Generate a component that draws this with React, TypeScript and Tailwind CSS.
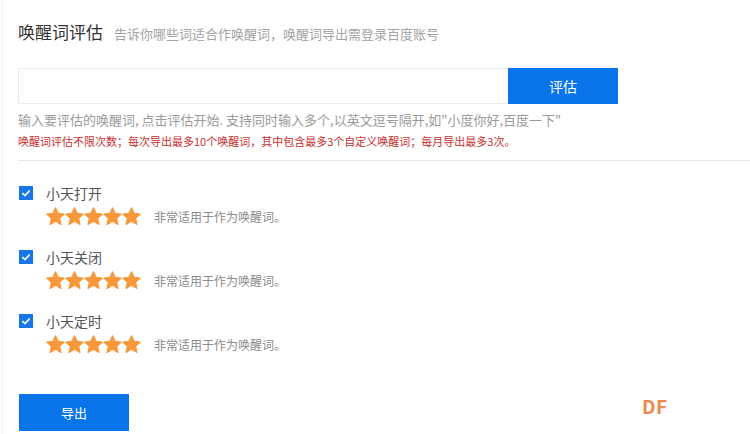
import { useState } from 'react'

const words = ['小天打开', '小天关闭', '小天定时']

function Star() {
  return (
    <svg viewBox="0 0 24 24" className="w-[19px] h-[19px]">
      <polygon
        points="12,1 15.3,8 23,8.9 17.3,14.2 18.9,22 12,18 5.1,22 6.7,14.2 1,8.9 8.7,8"
        fill="#f7993a"
        stroke="#f7993a"
        strokeWidth="1.4"
        strokeLinejoin="round"
      />
    </svg>
  )
}

function Checkbox({ checked, onClick }: { checked: boolean; onClick: () => void }) {
  return (
    <button
      onClick={onClick}
      className={`w-[14px] h-[14px] flex items-center justify-center ${
        checked ? 'bg-[#1677e8]' : 'bg-white border border-[#ccc]'
      }`}
    >
      {checked && (
        <svg viewBox="0 0 14 14" className="w-[14px] h-[14px]">
          <path d="M3.4 7.2 L6 9.6 L10.6 4.6" fill="none" stroke="#fff" strokeWidth="1.6" />
        </svg>
      )}
    </button>
  )
}

export default function App() {
  const [checked, setChecked] = useState([true, true, true])
  const [value, setValue] = useState('')

  return (
    <div
      className="relative w-[750px] h-[434px] overflow-hidden bg-white"
      style={{ fontFamily: '"Noto Sans CJK SC", "Noto Sans", "Liberation Sans", sans-serif' }}
    >
      <div className="ml-[2px] h-full border-l border-[#efefef] pl-[15px]">
        {/* header */}
        <div className="flex items-baseline pt-[19px]">
          <h2 className="text-[17px] leading-[26px] text-[#333]">唤醒词评估</h2>
          <span className="ml-[11px] text-[13px] text-[#a3a3a3]">
            告诉你哪些词适合作唤醒词，唤醒词导出需登录百度账号
          </span>
        </div>

        {/* input + evaluate */}
        <div className="flex mt-[23px] h-[36px]">
          <input
            className="w-[490px] h-full border border-[#ebebeb] border-r-0 outline-none px-3 text-[13px]"
            value={value}
            onChange={(e) => setValue(e.target.value)}
          />
          <button className="w-[110px] h-full bg-[#0a74ea] text-white text-[14px]">评估</button>
        </div>

        <p className="mt-[7px] text-[13px] leading-[18px] text-[#9a9a9a]">
          输入要评估的唤醒词, 点击评估开始. 支持同时输入多个,以英文逗号隔开,如"小度你好,百度一下"
        </p>
        <p className="mt-[4px] text-[11px] leading-[16px] text-[#c9302f]">
          唤醒词评估不限次数；每次导出最多10个唤醒词，其中包含最多3个自定义唤醒词；每月导出最多3次。
        </p>

        <div className="mt-[11px] border-t border-[#e8e8e8]" />

        {/* evaluated words */}
        <div className="flex flex-col gap-[21px] pt-[22px] pl-[1px]">
          {words.map((w, i) => (
            <div key={w}>
              <div className="flex items-center h-[20px]">
                <Checkbox
                  checked={checked[i]}
                  onClick={() => setChecked(checked.map((c, j) => (j === i ? !c : c)))}
                />
                <span className="ml-[13px] text-[14px] text-[#555]">{w}</span>
              </div>
              <div className="flex items-center mt-[4px] ml-[27px] h-[19px]">
                <div className="flex">
                  {[0, 1, 2, 3, 4].map((s) => (
                    <Star key={s} />
                  ))}
                </div>
                <span className="ml-[13px] text-[12px] text-[#8a8a8a]">非常适用于作为唤醒词。</span>
              </div>
            </div>
          ))}
        </div>

        <button className="mt-[40px] ml-[1px] w-[110px] h-[37px] bg-[#0a74ea] text-white text-[13px]">
          导出
        </button>
      </div>

      <div className="absolute left-[642px] top-[392px] text-[19px] font-bold text-[#ec7b3d] opacity-90 tracking-[0.5px]">
        DF
      </div>
    </div>
  )
}
